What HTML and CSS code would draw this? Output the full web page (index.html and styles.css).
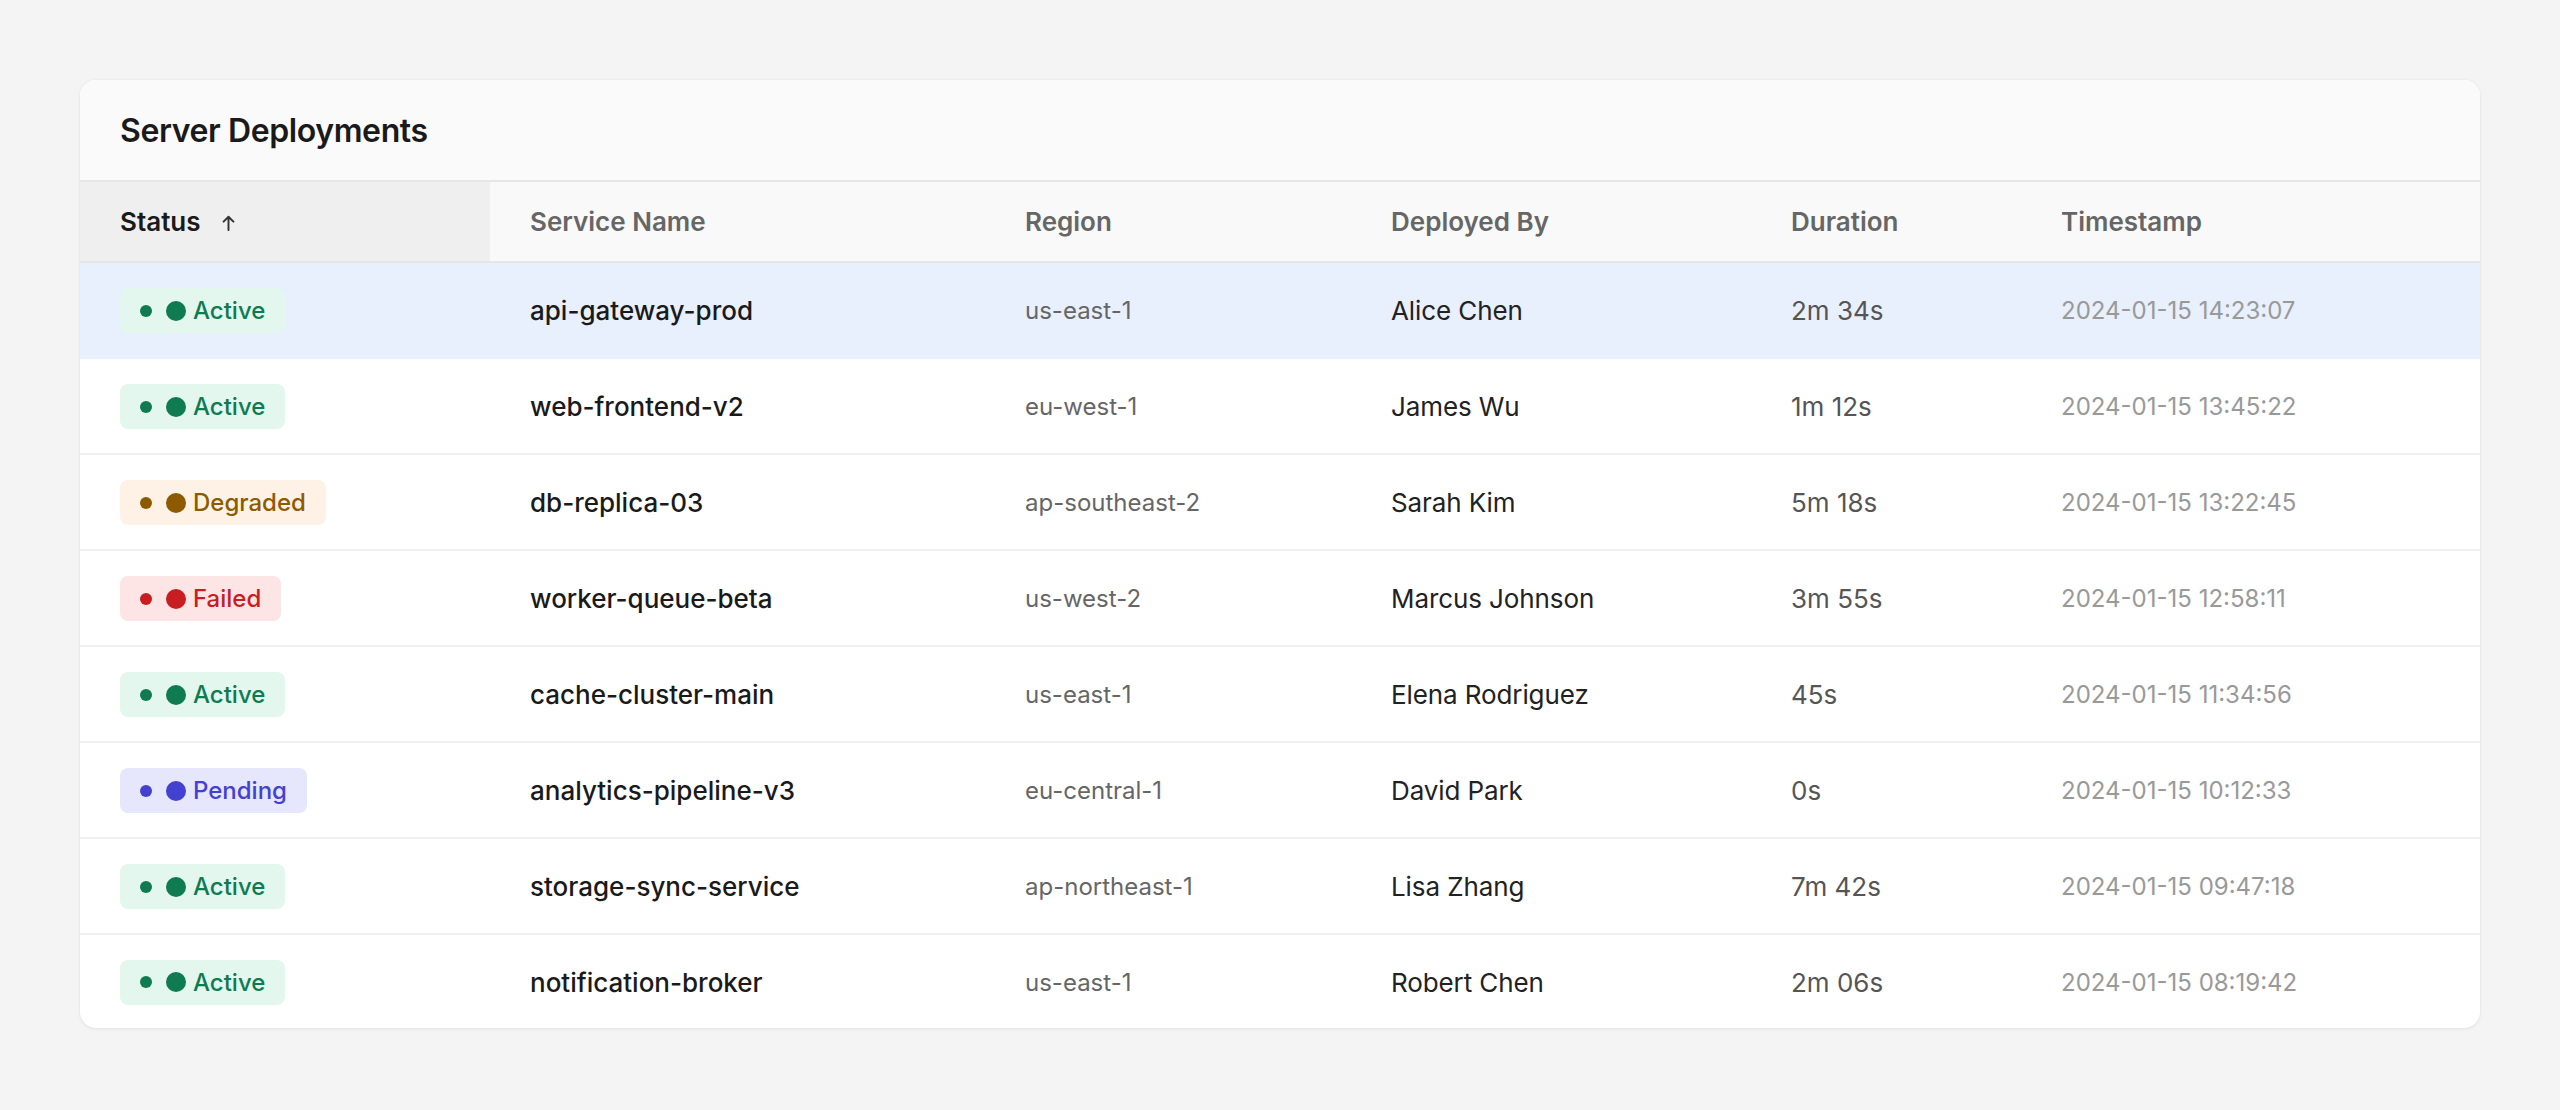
FILE: index.html
```html
<!DOCTYPE html>
<html lang="en">
<head>
<meta charset="utf-8">
<title>Server Deployments</title>
<link rel="stylesheet" href="styles.css">
</head>
<body>
<div class="card">
  <div class="card-head"><h1 class="title">Server Deployments</h1></div>
  <table class="grid">
    <colgroup>
      <col class="c-status"><col class="c-service"><col class="c-region"><col class="c-user"><col class="c-dur"><col class="c-time">
    </colgroup>
    <thead>
      <tr>
        <th class="sorted"><span class="th-inner">Status<svg class="sort" viewBox="0 0 16 18" width="15" height="16"><path d="M8 17V2M2.5 7.5L8 2l5.5 5.5" fill="none" stroke="#333" stroke-width="2.2" stroke-linecap="round" stroke-linejoin="round"/></svg></span></th>
        <th>Service Name</th>
        <th>Region</th>
        <th>Deployed By</th>
        <th>Duration</th>
        <th>Timestamp</th>
      </tr>
    </thead>
    <tbody>
      <tr class="selected">
        <td><span class="badge active"><span class="dot-s"></span><span class="dot-l"></span>Active</span></td>
        <td class="svc">api-gateway-prod</td><td class="region">us-east-1</td><td class="user">Alice Chen</td><td class="dur">2m 34s</td><td class="time">2024-01-15 14:23:07</td>
      </tr>
      <tr>
        <td><span class="badge active"><span class="dot-s"></span><span class="dot-l"></span>Active</span></td>
        <td class="svc">web-frontend-v2</td><td class="region">eu-west-1</td><td class="user">James Wu</td><td class="dur">1m 12s</td><td class="time">2024-01-15 13:45:22</td>
      </tr>
      <tr>
        <td><span class="badge degraded"><span class="dot-s"></span><span class="dot-l"></span>Degraded</span></td>
        <td class="svc">db-replica-03</td><td class="region">ap-southeast-2</td><td class="user">Sarah Kim</td><td class="dur">5m 18s</td><td class="time">2024-01-15 13:22:45</td>
      </tr>
      <tr>
        <td><span class="badge failed"><span class="dot-s"></span><span class="dot-l"></span>Failed</span></td>
        <td class="svc">worker-queue-beta</td><td class="region">us-west-2</td><td class="user">Marcus Johnson</td><td class="dur">3m 55s</td><td class="time">2024-01-15 12:58:11</td>
      </tr>
      <tr>
        <td><span class="badge active"><span class="dot-s"></span><span class="dot-l"></span>Active</span></td>
        <td class="svc">cache-cluster-main</td><td class="region">us-east-1</td><td class="user">Elena Rodriguez</td><td class="dur">45s</td><td class="time">2024-01-15 11:34:56</td>
      </tr>
      <tr>
        <td><span class="badge pending"><span class="dot-s"></span><span class="dot-l"></span>Pending</span></td>
        <td class="svc">analytics-pipeline-v3</td><td class="region">eu-central-1</td><td class="user">David Park</td><td class="dur">0s</td><td class="time">2024-01-15 10:12:33</td>
      </tr>
      <tr>
        <td><span class="badge active"><span class="dot-s"></span><span class="dot-l"></span>Active</span></td>
        <td class="svc">storage-sync-service</td><td class="region">ap-northeast-1</td><td class="user">Lisa Zhang</td><td class="dur">7m 42s</td><td class="time">2024-01-15 09:47:18</td>
      </tr>
      <tr>
        <td><span class="badge active"><span class="dot-s"></span><span class="dot-l"></span>Active</span></td>
        <td class="svc">notification-broker</td><td class="region">us-east-1</td><td class="user">Robert Chen</td><td class="dur">2m 06s</td><td class="time">2024-01-15 08:19:42</td>
      </tr>
    </tbody>
  </table>
</div>
</body>
</html>
```
FILE: styles.css
```css
* { box-sizing: border-box; }
html, body { margin: 0; }
body {
  background: #f4f4f4;
  padding: 80px;
  font-family: Inter, "Noto Sans", "Liberation Sans", sans-serif;
  color: #1a1a1a;
}
.card {
  width: 2400px;
  background: #ffffff;
  border-radius: 16px;
  overflow: hidden;
  box-shadow: 0 1px 4px rgba(0,0,0,0.06), 0 0 0 1px rgba(0,0,0,0.015);
}
.card-head {
  background: #fafafa;
  padding: 31px 40px 29px;
  border-bottom: 2px solid #e6e6e6;
}
.title {
  margin: 0;
  font-size: 32px;
  line-height: 40px;
  font-weight: 600;
  color: #1a1a1a;
  letter-spacing: -0.4px;
}
.grid {
  width: 2400px;
  table-layout: fixed;
  border-collapse: collapse;
}
.c-status { width: 410px; }
.c-service { width: 495px; }
.c-region { width: 366px; }
.c-user { width: 400px; }
.c-dur { width: 270px; }
.c-time { width: 459px; }
.grid th {
  background: #f9f9f9;
  height: 80px;
  padding: 1px 40px 0;
  text-align: left;
  font-size: 26px;
  line-height: 32px;
  font-weight: 600;
  color: #666666;
  border-bottom: 2px solid #e6e6e6;
}
.grid th.sorted {
  background: #efefef;
  color: #1a1a1a;
}
.th-inner {
  display: inline-flex;
  align-items: center;
}
.sort {
  margin-left: 20px;
  margin-top: 2px;
}
.grid td {
  height: 96px;
  padding: 1px 40px 0;
  border-bottom: 2px solid #f0f0f0;
  vertical-align: middle;
  white-space: nowrap;
}
.grid tbody tr:last-child td { border-bottom: none; height: 94px; }
.grid tr.selected td { background: #e8effd; border-bottom-color: #e8effd; }
.svc { font-size: 26px; font-weight: 500; color: #1a1a1a; }
.region { font-size: 24px; color: #666666; }
.user { font-size: 26px; color: #222222; letter-spacing: -0.1px; }
.dur { font-size: 26px; color: #555555; }
.time { font-size: 24px; color: #999999; }
.badge {
  display: inline-flex;
  align-items: center;
  height: 45px;
  padding: 0 20px;
  border-radius: 8px;
  font-size: 24px;
  font-weight: 500;
  vertical-align: middle;
}
.dot-s {
  width: 12px;
  height: 12px;
  border-radius: 50%;
  background: currentColor;
  margin-right: 14px;
}
.dot-l {
  width: 20px;
  height: 20px;
  border-radius: 50%;
  background: currentColor;
  margin-right: 7px;
}
.badge.active { background: #e4f7ee; color: #0e7b50; }
.badge.degraded { background: #fef2e6; color: #8d5a00; }
.badge.failed { background: #fde5e6; color: #c81e22; }
.badge.pending { background: #e6e6fc; color: #4341d0; }
```
